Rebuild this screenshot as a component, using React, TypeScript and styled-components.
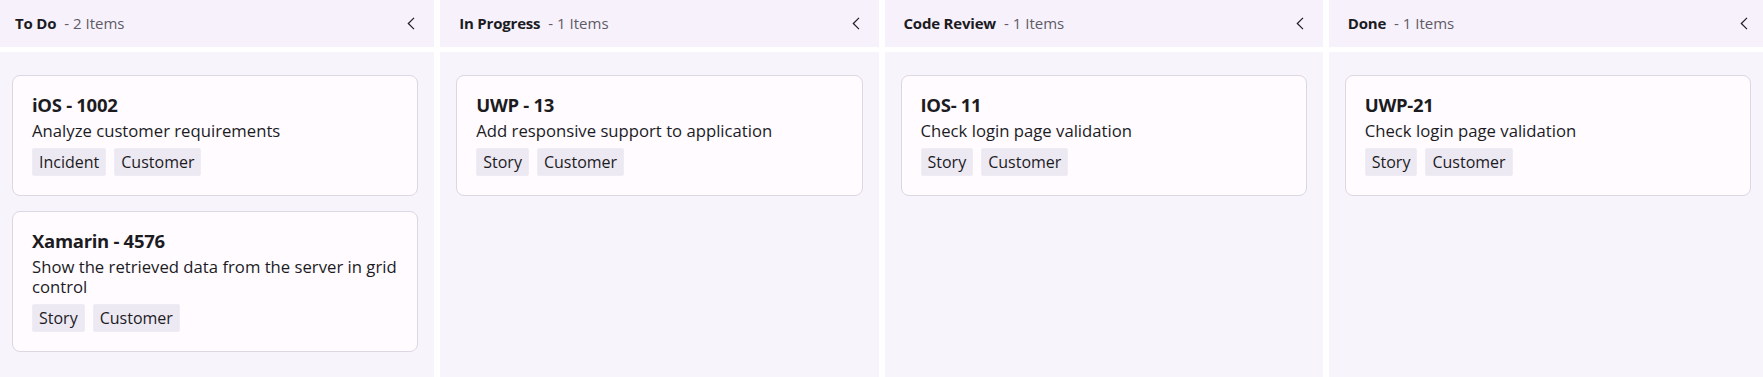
import React from 'react';
import styled, { createGlobalStyle } from 'styled-components';

const textColor = '#1c1b1f';
const mutedColor = '#5f5b66';

const GlobalStyle = createGlobalStyle`
  html, body {
    margin: 0;
    padding: 0;
    background: #ffffff;
    overflow: hidden;
  }
  body {
    font-family: 'Open Sans', 'Noto Sans', sans-serif;
    color: ${textColor};
  }
`;

const Board = styled.div`
  display: flex;
  gap: 6px;
  height: 377px;
  margin: 0 -4px;
  box-sizing: border-box;
`;

const Column = styled.section`
  flex: 1 1 0;
  min-width: 0;
  display: flex;
  flex-direction: column;
`;

const ColumnHeader = styled.header`
  height: 47px;
  margin-bottom: 5px;
  padding: 0 19px 1px 19px;
  box-sizing: border-box;
  background: #f6f1fb;
  display: flex;
  align-items: center;
`;

const ColumnTitle = styled.span`
  font-size: 15px;
  font-weight: 700;
  letter-spacing: -0.2px;
`;

const ItemCount = styled.span`
  flex: 1;
  margin-left: 8px;
  font-size: 15px;
  color: ${mutedColor};
`;

const CollapseButton = styled.button`
  border: 0;
  padding: 0;
  background: transparent;
  display: flex;
  color: ${textColor};
  cursor: pointer;
`;

const ColumnBody = styled.div`
  flex: 1;
  background: #f7f4fc;
  padding: 23px 16px 0;
  display: flex;
  flex-direction: column;
  gap: 15px;
`;

const Card = styled.article`
  background: #fffbff;
  border: 1px solid #dcd7e2;
  border-radius: 8px;
  padding: 17px 19px 19px;
`;

const CardTitle = styled.div`
  font-size: 18.5px;
  font-weight: 700;
  line-height: 24px;
  letter-spacing: -0.3px;
`;

const CardText = styled.div`
  margin-top: 4px;
  font-size: 16.7px;
  line-height: 20px;
`;

const TagRow = styled.div`
  margin-top: 7px;
  display: flex;
  gap: 8px;
`;

const Tag = styled.span`
  height: 28px;
  line-height: 26px;
  padding: 0 6px;
  box-sizing: border-box;
  background: #ede9f3;
  border: 1px solid #f0ecf5;
  border-radius: 2px;
  font-size: 16px;
`;

type Task = { id: string; summary: string; tags: string[] };
type Lane = { title: string; tasks: Task[] };

const lanes: Lane[] = [
  {
    title: 'To Do',
    tasks: [
      { id: 'iOS - 1002', summary: 'Analyze customer requirements', tags: ['Incident', 'Customer'] },
      { id: 'Xamarin - 4576', summary: 'Show the retrieved data from the server in grid control', tags: ['Story', 'Customer'] },
    ],
  },
  {
    title: 'In Progress',
    tasks: [{ id: 'UWP - 13', summary: 'Add responsive support to application', tags: ['Story', 'Customer'] }],
  },
  {
    title: 'Code Review',
    tasks: [{ id: 'IOS- 11', summary: 'Check login page validation', tags: ['Story', 'Customer'] }],
  },
  {
    title: 'Done',
    tasks: [{ id: 'UWP-21', summary: 'Check login page validation', tags: ['Story', 'Customer'] }],
  },
];

function Chevron() {
  return (
    <svg width="8" height="13" viewBox="0 0 8 13" fill="none">
      <path d="M7 0.8 L1.3 6.5 L7 12.2" stroke="currentColor" strokeWidth="1.2" />
    </svg>
  );
}

export default function App() {
  return (
    <>
      <GlobalStyle />
      <Board>
        {lanes.map((lane) => (
          <Column key={lane.title}>
            <ColumnHeader>
              <ColumnTitle>{lane.title}</ColumnTitle>
              <ItemCount>- {lane.tasks.length} Items</ItemCount>
              <CollapseButton aria-label="Collapse">
                <Chevron />
              </CollapseButton>
            </ColumnHeader>
            <ColumnBody>
              {lane.tasks.map((task) => (
                <Card key={task.id}>
                  <CardTitle>{task.id}</CardTitle>
                  <CardText>{task.summary}</CardText>
                  <TagRow>
                    {task.tags.map((tag) => (
                      <Tag key={tag}>{tag}</Tag>
                    ))}
                  </TagRow>
                </Card>
              ))}
            </ColumnBody>
          </Column>
        ))}
      </Board>
    </>
  );
}
